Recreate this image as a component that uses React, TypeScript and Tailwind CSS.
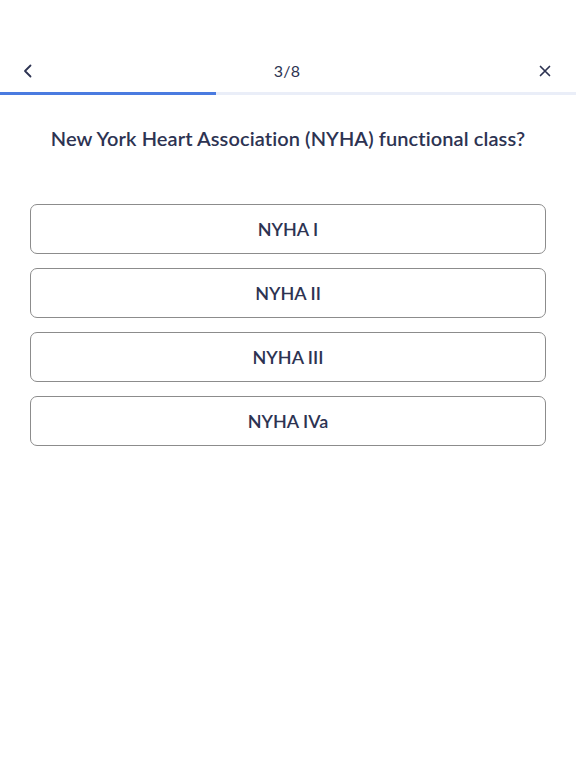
import React from "react";

export default function App() {
  const options = ["NYHA I", "NYHA II", "NYHA III", "NYHA IVa"];
  return (
    <div className="w-[576px] h-[768px] bg-white flex flex-col" style={{ fontFamily: "Lato, 'Noto Sans', sans-serif" }}>
      <div className="h-[50px]" />
      <div className="h-[42px] flex items-center justify-between px-[20px] text-[#2d3352]">
        <svg width="16" height="16" viewBox="0 0 16 16" fill="none">
          <path d="M10.5 2.5 L5 8 L10.5 13.5" stroke="#2d3352" strokeWidth="1.8" strokeLinecap="round" strokeLinejoin="round" />
        </svg>
        <span className="text-[16px] tracking-[0.2px]">3/8</span>
        <svg width="14" height="14" viewBox="0 0 14 14" fill="none" className="mr-[4px]">
          <path d="M2.5 2.5 L11.5 11.5 M11.5 2.5 L2.5 11.5" stroke="#2d3352" strokeWidth="1.7" strokeLinecap="round" />
        </svg>
      </div>
      <div className="h-[3px] bg-[#eaeef8] flex">
        <div className="w-[216px] h-full bg-[#4a7be0]" />
      </div>
      <h1 className="mt-[29px] text-center text-[20px] leading-[28px] font-semibold text-[#2d3352] tracking-[0.1px]">
        New York Heart Association (NYHA) functional class?
      </h1>
      <div className="mt-[52px] px-[30px] flex flex-col gap-[14px]">
        {options.map((o) => (
          <button
            key={o}
            className="h-[50px] w-full rounded-[7px] border border-[#8c8c8c] bg-white text-[18px] font-semibold text-[#2d3352] flex items-center justify-center"
          >
            {o}
          </button>
        ))}
      </div>
    </div>
  );
}
